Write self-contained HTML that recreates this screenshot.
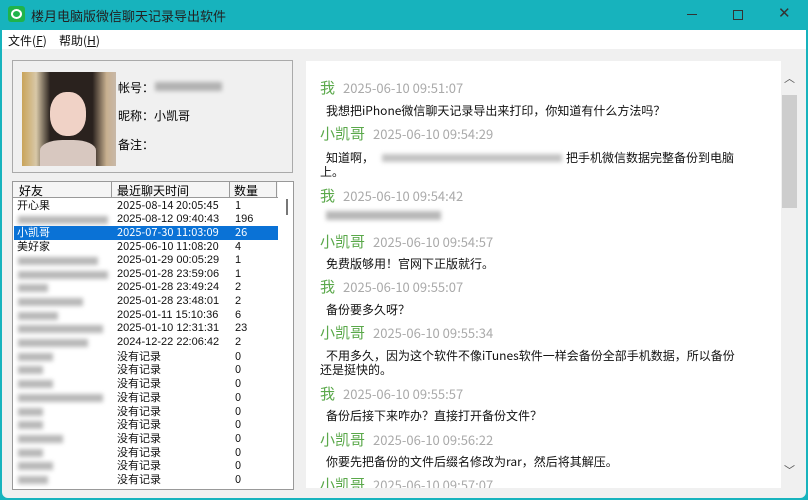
<!DOCTYPE html>
<html><head><meta charset="utf-8"><style>
*{margin:0;padding:0;box-sizing:border-box}
body{width:808px;height:500px;overflow:hidden;background:#17b3bd;font-family:"Liberation Sans","Noto Sans CJK SC",sans-serif;position:relative}
.a{position:absolute}
.cn{font-family:"Noto Sans CJK SC","WenQuanYi Zen Hei",sans-serif}
.win{left:2px;top:30px;width:804px;height:468px;background:#f0f0f0;border-radius:0 0 6px 6px}
.row{position:absolute;left:0;width:270px;height:13.7px;font-size:11px;line-height:13.7px;color:#111}
.row span{position:absolute}
.blur{background:#888;filter:blur(2px);opacity:.6}
.nm{font-size:15px;color:#5aa84a}
.tm{font-size:13px;color:#aaa;margin-left:8px}
.msg{font-size:12px;color:#111}
</style></head><body>
<div class="a" style="left:8px;top:6px;width:17px;height:16px;background:#1fb34a;border-radius:3px"></div>
<div class="a" style="left:11px;top:9px;width:11px;height:10px;border:2px solid #fff;border-radius:50%"></div>
<div class="a cn" style="left:31px;top:6px;font-size:13px;color:#222">楼月电脑版微信聊天记录导出软件</div>
<div class="a" style="left:687px;top:14px;width:10px;height:1px;background:#333"></div>
<div class="a" style="left:733px;top:10px;width:10px;height:10px;border:1px solid #333"></div>
<div class="a" style="left:778px;top:4px;font-size:15px;color:#333">✕</div>
<div class="a win"></div>
<div class="a" style="left:2px;top:30px;width:804px;height:19px;background:#fff"></div>
<div class="a cn" style="left:8px;top:32px;font-size:12px;color:#111">文件(<u>F</u>)</div>
<div class="a cn" style="left:59px;top:32px;font-size:12px;color:#111">帮助(<u>H</u>)</div>
<!-- profile -->
<div class="a" style="left:12px;top:60px;width:281px;height:113px;border:1px solid #aaa"></div>
<div class="a" style="left:22px;top:72px;width:94px;height:94px;background:linear-gradient(90deg,#c9a45a 0%,#d8c8a8 15%,#2a221e 30%,#2a221e 75%,#c8b090 90%,#c8b8a8 100%)"></div>
<div class="a" style="left:50px;top:92px;width:36px;height:44px;background:#f0d2c6;border-radius:45%"></div>
<div class="a" style="left:40px;top:140px;width:56px;height:26px;background:#d8c8c0;border-radius:40% 40% 0 0"></div>
<div class="a cn" style="left:118px;top:79px;font-size:12px">帐号：</div>
<div class="a blur" style="left:155px;top:82px;width:67px;height:9px"></div>
<div class="a cn" style="left:118px;top:107px;font-size:12px">昵称：小凯哥</div>
<div class="a cn" style="left:118px;top:136px;font-size:12px">备注：</div>
<!-- list -->
<div class="a" style="left:12px;top:181px;width:282px;height:309px;background:#fff;border:1px solid #999"></div>
<div class="a" style="left:13px;top:182px;width:265px;height:16px;background:#f5f5f5;border-bottom:1px solid #999"></div>
<div class="a cn" style="left:19px;top:182px;font-size:12px">好友</div>
<div class="a" style="left:111px;top:182px;width:1px;height:16px;background:#999"></div>
<div class="a cn" style="left:117px;top:182px;font-size:12px">最近聊天时间</div>
<div class="a" style="left:229px;top:182px;width:1px;height:16px;background:#999"></div>
<div class="a cn" style="left:234px;top:182px;font-size:12px">数量</div>
<div class="a" style="left:276px;top:182px;width:1px;height:16px;background:#999"></div>
<div class="a" style="left:286px;top:199px;width:2px;height:16px;background:#777"></div>
<div class="a" style="left:14px;top:199px;width:272px;height:290px;overflow:hidden">
<div class="row cn" style="top:0"><span style="left:3px">开心果</span><span style="left:103px">2025-08-14 20:05:45</span><span style="left:221px">1</span></div>
<div class="row" style="top:13.7px"><span class="blur" style="left:4px;top:3px;width:90px;height:8px"></span><span style="left:103px">2025-08-12 09:40:43</span><span style="left:221px">196</span></div>
<div class="row cn" style="top:27.4px;background:#0a72d6;color:#fff;width:264px"><span style="left:3px">小凯哥</span><span style="left:103px">2025-07-30 11:03:09</span><span style="left:221px">26</span></div>
<div class="row cn" style="top:41.1px"><span style="left:3px">美好家</span><span style="left:103px">2025-06-10 11:08:20</span><span style="left:221px">4</span></div>
<div class="row" style="top:54.8px"><span class="blur" style="left:4px;top:3px;width:80px;height:8px"></span><span style="left:103px">2025-01-29 00:05:29</span><span style="left:221px">1</span></div>
<div class="row" style="top:68.5px"><span class="blur" style="left:4px;top:3px;width:90px;height:8px"></span><span style="left:103px">2025-01-28 23:59:06</span><span style="left:221px">1</span></div>
<div class="row" style="top:82.2px"><span class="blur" style="left:4px;top:3px;width:30px;height:8px"></span><span style="left:103px">2025-01-28 23:49:24</span><span style="left:221px">2</span></div>
<div class="row" style="top:95.9px"><span class="blur" style="left:4px;top:3px;width:65px;height:8px"></span><span style="left:103px">2025-01-28 23:48:01</span><span style="left:221px">2</span></div>
<div class="row" style="top:109.6px"><span class="blur" style="left:4px;top:3px;width:40px;height:8px"></span><span style="left:103px">2025-01-11 15:10:36</span><span style="left:221px">6</span></div>
<div class="row" style="top:123.3px"><span class="blur" style="left:4px;top:3px;width:85px;height:8px"></span><span style="left:103px">2025-01-10 12:31:31</span><span style="left:221px">23</span></div>
<div class="row" style="top:137px"><span class="blur" style="left:4px;top:3px;width:70px;height:8px"></span><span style="left:103px">2024-12-22 22:06:42</span><span style="left:221px">2</span></div>
<div class="row cn" style="top:150.7px"><span class="blur" style="left:4px;top:3px;width:35px;height:8px"></span><span style="left:103px">没有记录</span><span style="left:221px">0</span></div>
<div class="row cn" style="top:164.4px"><span class="blur" style="left:4px;top:3px;width:25px;height:8px"></span><span style="left:103px">没有记录</span><span style="left:221px">0</span></div>
<div class="row cn" style="top:178.1px"><span class="blur" style="left:4px;top:3px;width:35px;height:8px"></span><span style="left:103px">没有记录</span><span style="left:221px">0</span></div>
<div class="row cn" style="top:191.8px"><span class="blur" style="left:4px;top:3px;width:85px;height:8px"></span><span style="left:103px">没有记录</span><span style="left:221px">0</span></div>
<div class="row cn" style="top:205.5px"><span class="blur" style="left:4px;top:3px;width:25px;height:8px"></span><span style="left:103px">没有记录</span><span style="left:221px">0</span></div>
<div class="row cn" style="top:219.2px"><span class="blur" style="left:4px;top:3px;width:25px;height:8px"></span><span style="left:103px">没有记录</span><span style="left:221px">0</span></div>
<div class="row cn" style="top:232.9px"><span class="blur" style="left:4px;top:3px;width:45px;height:8px"></span><span style="left:103px">没有记录</span><span style="left:221px">0</span></div>
<div class="row cn" style="top:246.6px"><span class="blur" style="left:4px;top:3px;width:25px;height:8px"></span><span style="left:103px">没有记录</span><span style="left:221px">0</span></div>
<div class="row cn" style="top:260.3px"><span class="blur" style="left:4px;top:3px;width:35px;height:8px"></span><span style="left:103px">没有记录</span><span style="left:221px">0</span></div>
<div class="row cn" style="top:274px"><span class="blur" style="left:4px;top:3px;width:30px;height:8px"></span><span style="left:103px">没有记录</span><span style="left:221px">0</span></div>
</div>
<!-- chat -->
<div class="a" style="left:306px;top:61px;width:475px;height:427px;background:#fff;overflow:hidden">
<div class="a cn" style="left:14px;top:13px;white-space:nowrap"><span class="nm">我</span><span class="tm">2025-06-10 09:51:07</span></div>
<div class="a cn msg" style="left:20px;top:41px">我想把iPhone微信聊天记录导出来打印，你知道有什么方法吗？</div>
<div class="a cn" style="left:14px;top:59px;white-space:nowrap"><span class="nm">小凯哥</span><span class="tm">2025-06-10 09:54:29</span></div>
<div class="a cn msg" style="left:20px;top:88px">知道啊，</div>
<div class="a blur" style="left:76px;top:93px;width:180px;height:8px;opacity:.5"></div>
<div class="a cn msg" style="left:260px;top:88px">把手机微信数据完整备份到电脑</div>
<div class="a cn msg" style="left:14px;top:102px">上。</div>
<div class="a cn" style="left:14px;top:121px;white-space:nowrap"><span class="nm">我</span><span class="tm">2025-06-10 09:54:42</span></div>
<div class="a blur" style="left:20px;top:150px;width:115px;height:9px;opacity:.6"></div>
<div class="a cn" style="left:14px;top:167px;white-space:nowrap"><span class="nm">小凯哥</span><span class="tm">2025-06-10 09:54:57</span></div>
<div class="a cn msg" style="left:20px;top:194px">免费版够用！官网下正版就行。</div>
<div class="a cn" style="left:14px;top:212px;white-space:nowrap"><span class="nm">我</span><span class="tm">2025-06-10 09:55:07</span></div>
<div class="a cn msg" style="left:20px;top:240px">备份要多久呀？</div>
<div class="a cn" style="left:14px;top:258px;white-space:nowrap"><span class="nm">小凯哥</span><span class="tm">2025-06-10 09:55:34</span></div>
<div class="a cn msg" style="left:20px;top:286px">不用多久，因为这个软件不像iTunes软件一样会备份全部手机数据，所以备份</div>
<div class="a cn msg" style="left:14px;top:300px">还是挺快的。</div>
<div class="a cn" style="left:14px;top:319px;white-space:nowrap"><span class="nm">我</span><span class="tm">2025-06-10 09:55:57</span></div>
<div class="a cn msg" style="left:20px;top:346px">备份后接下来咋办？直接打开备份文件？</div>
<div class="a cn" style="left:14px;top:365px;white-space:nowrap"><span class="nm">小凯哥</span><span class="tm">2025-06-10 09:56:22</span></div>
<div class="a cn msg" style="left:20px;top:392px">你要先把备份的文件后缀名修改为rar，然后将其解压。</div>
<div class="a cn" style="left:14px;top:410px;white-space:nowrap"><span class="nm">小凯哥</span><span class="tm">2025-06-10 09:57:07</span></div>
</div>
<div class="a" style="left:781px;top:61px;width:25px;height:427px;background:#f0f0f0"></div>
<div class="a" style="left:784px;top:70px;font-size:11px;color:#555">︿</div>
<div class="a" style="left:782px;top:95px;width:15px;height:113px;background:#cdcdcd"></div>
<div class="a" style="left:784px;top:462px;font-size:11px;color:#555">﹀</div>
</body></html>
